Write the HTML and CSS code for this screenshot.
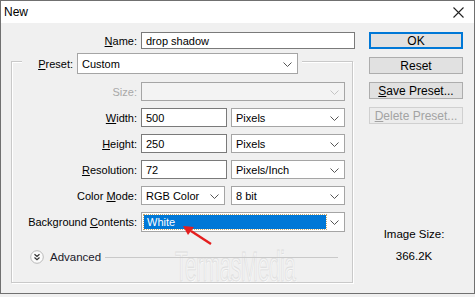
FILE: index.html
```html
<!DOCTYPE html>
<html lang="en">
<head>
  <meta charset="UTF-8">
  <title>New</title>
  <link rel="stylesheet" href="styles.css">
</head>
<body>
  <div class="window">
    <div class="titlebar">
      <span class="title">New</span>
      <svg class="close" width="11" height="11" viewBox="0 0 11 11">
        <path d="M0.5 0.5 L10.5 10.5 M10.5 0.5 L0.5 10.5" stroke="#222" stroke-width="1.1" fill="none"/>
      </svg>
    </div>
    <div class="content">
      <div class="form">
        <div class="row name-row">
          <label class="lbl"><u>N</u>ame:</label>
          <div class="field text name-field">drop shadow</div>
        </div>
        <div class="group">
          <div class="legend">
            <label class="lbl preset-lbl"><u>P</u>reset:</label>
            <div class="field select preset-field">Custom
              <svg class="chev" width="9" height="5" viewBox="0 0 9 5"><path d="M0.5 0.5 L4.5 4.5 L8.5 0.5" stroke="#555" fill="none"/></svg>
            </div>
          </div>
          <div class="row">
            <label class="lbl disabled">Size:</label>
            <div class="field select full disabled-field">
              <svg class="chev" width="9" height="5" viewBox="0 0 9 5"><path d="M0.5 0.5 L4.5 4.5 L8.5 0.5" stroke="#c4c4c4" fill="none"/></svg>
            </div>
          </div>
          <div class="row">
            <label class="lbl"><u>W</u>idth:</label>
            <div class="field text small">500</div>
            <div class="field select unit">Pixels
              <svg class="chev" width="9" height="5" viewBox="0 0 9 5"><path d="M0.5 0.5 L4.5 4.5 L8.5 0.5" stroke="#555" fill="none"/></svg>
            </div>
          </div>
          <div class="row">
            <label class="lbl"><u>H</u>eight:</label>
            <div class="field text small">250</div>
            <div class="field select unit">Pixels
              <svg class="chev" width="9" height="5" viewBox="0 0 9 5"><path d="M0.5 0.5 L4.5 4.5 L8.5 0.5" stroke="#555" fill="none"/></svg>
            </div>
          </div>
          <div class="row">
            <label class="lbl"><u>R</u>esolution:</label>
            <div class="field text small">72</div>
            <div class="field select unit">Pixels/Inch
              <svg class="chev" width="9" height="5" viewBox="0 0 9 5"><path d="M0.5 0.5 L4.5 4.5 L8.5 0.5" stroke="#555" fill="none"/></svg>
            </div>
          </div>
          <div class="row">
            <label class="lbl">Color <u>M</u>ode:</label>
            <div class="field select mode">RGB Color
              <svg class="chev" width="9" height="5" viewBox="0 0 9 5"><path d="M0.5 0.5 L4.5 4.5 L8.5 0.5" stroke="#555" fill="none"/></svg>
            </div>
            <div class="field select unit">8 bit
              <svg class="chev" width="9" height="5" viewBox="0 0 9 5"><path d="M0.5 0.5 L4.5 4.5 L8.5 0.5" stroke="#555" fill="none"/></svg>
            </div>
          </div>
          <div class="row bg-row">
            <label class="lbl">Background <u>C</u>ontents:</label>
            <div class="field select full focused">
              <span class="picked">White</span>
              <svg class="chev" width="9" height="5" viewBox="0 0 9 5"><path d="M0.5 0.5 L4.5 4.5 L8.5 0.5" stroke="#555" fill="none"/></svg>
            </div>
          </div>
          <div class="advanced">
            <svg class="adv-icon" width="14" height="14" viewBox="0 0 14 14">
              <circle cx="7" cy="7" r="6.3" fill="#fbfbfb" stroke="#b9b9b9"/>
              <path d="M4.5 4.3 L7 6.5 L9.5 4.3 M4.5 7.5 L7 9.7 L9.5 7.5" stroke="#333" stroke-width="1.2" fill="none"/>
            </svg>
            <span class="adv-text">Advanced</span>
            <span class="adv-line"></span>
          </div>
          <div class="watermark">TermasMedia</div>
        </div>
      </div>
      <div class="side">
        <button class="btn default">OK</button>
        <button class="btn">Reset</button>
        <button class="btn"><u>S</u>ave Preset...</button>
        <button class="btn off"><u>D</u>elete Preset...</button>
        <div class="img-size">
          <span>Image Size:</span>
          <span>366.2K</span>
        </div>
      </div>
    </div>
    <svg class="arrow" width="34" height="22" viewBox="0 0 34 22">
      <path d="M30 20 L10 7" stroke="#e41e1e" stroke-width="2.4" fill="none"/>
      <path d="M2 2 L13 3 L7 11 Z" fill="#e41e1e"/>
    </svg>
  </div>
</body>
</html>
```

FILE: styles.css
```css
* {
  box-sizing: border-box;
}

body {
  margin: 0;
  background-color: #f0f0f0;
  font-family: 'Liberation Sans', Arial, sans-serif;
  font-size: 11px;
  color: #000;
}

.window {
  position: relative;
  width: 475px;
  height: 294px;
  border: 1px solid #707070;
  background-color: #f0f0f0;
  overflow: hidden;
}

.titlebar {
  height: 22px;
  background-color: #fff;
  display: flex;
  align-items: center;
  justify-content: space-between;
  padding: 0 10px 0 3px;
}

.title {
  font-size: 12px;
}

.content {
  display: flex;
  padding: 9px 0 0 10px;
  gap: 14px;
}

.form {
  width: 344px;
}

.row {
  display: flex;
  align-items: center;
  gap: 4px;
  height: 19px;
  margin-bottom: 7px;
}

.lbl {
  width: 125px;
  text-align: right;
  white-space: nowrap;
}

.lbl.disabled {
  color: #a8a8a8;
}

.name-row {
  height: 17px;
  margin-bottom: 0;
}

.name-row .lbl {
  width: 126px;
}

.field {
  height: 100%;
  border: 1px solid #7a7a7a;
  background-color: #fff;
  display: flex;
  align-items: center;
  padding-left: 4px;
  position: relative;
  white-space: nowrap;
}

.field.select {
  border-color: #a5a5a5;
}

.chev {
  position: absolute;
  right: 5px;
  top: 50%;
  margin-top: -2px;
}

.name-field {
  width: 214px;
}

.full {
  width: 204px;
}

.small {
  width: 86px;
}

.unit {
  width: 114px;
}

.mode {
  width: 84px;
  margin-right: 2px;
}

.disabled-field {
  background-color: #f3f3f3;
  border-color: #d9d9d9;
}

.group {
  position: relative;
  width: 342px;
  margin-top: 12px;
  border: 1px solid #c9c9c9;
  box-shadow: inset 1px 1px 0 #fff, 1px 1px 0 #fff;
  padding-bottom: 18px;
}

.legend {
  display: flex;
  align-items: center;
  gap: 4px;
  width: 280px;
  height: 21px;
  margin: -9px 0 8px 10px;
  padding: 0 4px;
  background-color: #f0f0f0;
}

.preset-lbl {
  width: 47px;
}

.preset-field {
  width: 221px;
}

.bg-row {
  height: 20px;
  margin-bottom: 0;
}

.focused {
  padding: 2px 18px 2px 2px;
}

.picked {
  flex: 1;
  height: 100%;
  background-color: #0078d7;
  color: #fff;
  padding-left: 3px;
  display: flex;
  align-items: center;
  outline: 1px dotted #c8a86a;
}

.advanced {
  display: flex;
  align-items: center;
  height: 14px;
  margin: 18px 14px 0 18px;
  position: relative;
  z-index: 1;
}

.adv-text {
  margin-left: 6px;
  font-size: 11.5px;
  color: #1a1a2a;
}

.adv-line {
  flex: 1;
  height: 1px;
  margin-left: 4px;
  background-color: #c9c9c9;
}

.watermark {
  position: absolute;
  left: 163px;
  bottom: -9px;
  font-size: 42px;
  font-family: 'Liberation Sans Narrow', 'Liberation Sans', sans-serif;
  letter-spacing: -1px;
  transform: scaleX(0.5);
  transform-origin: left bottom;
  color: #f4f4f4;
  -webkit-text-stroke: 1px #dedede;
  text-shadow: 1px 1px 0 #fff;
}

.side {
  display: flex;
  flex-direction: column;
  gap: 8px;
  width: 94px;
}

.btn {
  height: 17px;
  padding: 0;
  border: 1px solid #adadad;
  background-color: #e1e1e1;
  font-family: inherit;
  font-size: 12px;
  color: #000;
}

.btn.default {
  border: 2px solid #0078d7;
}

.btn.off {
  color: #a3a3a3;
  background-color: #ececec;
  border-color: #d0d0d0;
}

.img-size {
  display: flex;
  flex-direction: column;
  align-items: center;
  gap: 10px;
  margin-top: 96px;
  font-size: 11.5px;
  padding-right: 4px;
}

.arrow {
  position: absolute;
  left: 180px;
  top: 223px;
}
```
